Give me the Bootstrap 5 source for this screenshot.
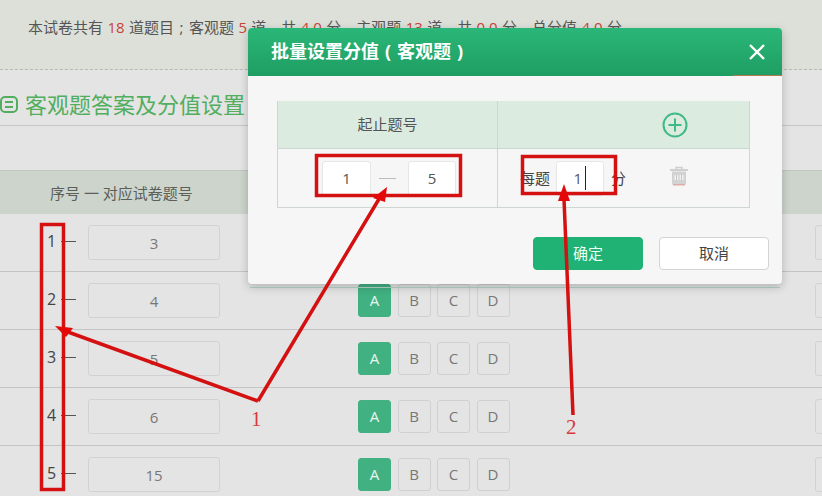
<!DOCTYPE html>
<html lang="zh">
<head>
<meta charset="utf-8">
<title>批量设置分值</title>
<link href="https://cdn.jsdelivr.net/npm/bootstrap@5.3.0/dist/css/bootstrap.min.css" rel="stylesheet">
<style>
html,body{height:496px;overflow:hidden}
body{position:relative;width:822px;background:#e4e4e4;font-family:"Open Sans","Noto Sans CJK SC",sans-serif;font-size:15px;color:#555}
.wide-punct{display:inline-block;width:1em;text-align:center}
.summary-band{height:70px;padding:18px 0 0 28px;background:#dde0d8;border-bottom:1px dashed #b9b9b9;line-height:18px;white-space:nowrap}
.summary-band em{font-style:normal;color:#c8423c;margin:0 .5px}
.section-title{height:56px;padding-top:20px;border-bottom:1px solid #c6c6c6;color:#52ae5e;font-size:22px;line-height:28px;white-space:nowrap}
.section-title svg{margin-right:7px;vertical-align:0}
.list-head{height:44px;margin-top:44px;padding-left:50px;background:#ccd4cc;border-top:1px solid #bfc7bf;line-height:44px;color:#5a5f5a}
.q-row{height:58px;border-bottom:1px solid #c4c4c4;overflow:hidden}
.q-row:last-child{border-bottom:0}
.q-num{flex:none;width:14px;margin:-4px 0 0 47px;font-size:16px;color:#444;line-height:20px}
.q-dash{flex:none;width:15px;height:1px;margin:-3px 0 0 0;background:#555}
.q-field.form-control{flex:none;width:132px;height:35px;margin-left:12px;padding:0;background:transparent;border-color:#d2d2d2;border-radius:3px;color:#777;font-size:15px;text-align:center}
.q-opts{flex:none;margin-left:138px;gap:6.5px}
.q-opt{width:33px;height:33px;padding:0;border:1px solid #d0d0d0;border-radius:3px;color:#777;font-size:15px;line-height:31px;text-align:center}
.q-opt.is-on{background:#41b182;border-color:#41b182;color:#e9f6f0}
.q-edge{flex:none;width:60px;height:35px;margin-left:305px;border:1px solid #d2d2d2;border-radius:3px}
.dlg{position:absolute;left:248px;top:28px;width:534px;height:256px;background:#f6f6f6;border-radius:4px;box-shadow:0 3px 10px rgba(0,0,0,.22)}
.dlg-head{height:48px;padding:0 16px 0 23px;background:linear-gradient(#2ab778,#1f9e63);border-radius:4px 4px 0 0;border-bottom:1px solid #1f9e63;color:#fff;font-size:18px;font-weight:700;position:relative}
.dlg-head::after{content:"";position:absolute;right:0;bottom:-1px;width:49px;height:1px;background:#b5794d}
.dlg-under{position:absolute;left:250px;top:287px;width:530px;height:1px;background:#b5d3c6}
.dlg-table{width:473px;margin:25px 0 0 29px;border:1px solid #cfd6d1;border-top:0}
.dlg-hrow{height:48px;background:#dcebdf;border-bottom:1px solid #cbd6ce;color:#555}
.dlg-brow{height:58px}
.cell-a{width:220px;border-right:1px solid #cfd6d1}
.cell-b{flex:1;min-width:0}
.add-slot{margin-left:164px}
.range-input.form-control{flex:none;width:49px;height:35px;padding:0;border-color:#e6e6e6;border-radius:3px;background:#fff;color:#555;font-size:15px;text-align:center}
.range-input.range-end{width:48px}
.range-dash{flex:none;width:17px;height:1px;margin:0 12px 0 8px;background:#bbb}
.range-start{margin-left:44px}
.per-label{margin-left:22px;color:#444;line-height:35px;white-space:nowrap}
.per-box{flex:none;width:48px;height:35px;margin:0 7px 0 6px;padding-right:21px;background:#fff;border:1px solid #e6e6e6;border-radius:3px;font-size:15px;line-height:33px;text-align:right;color:#555;position:relative}
.per-box::after{content:"";position:absolute;left:28px;top:4px;width:1px;height:24px;background:#222}
.trash-slot{margin-left:43px;margin-top:-5px}
.dlg-foot{margin:29px 13px 0 0;gap:16px}
.dlg-ok.btn,.dlg-no.btn{width:110px;height:33px;padding:0;border-radius:4px;font-size:15px;line-height:31px}
.dlg-ok.btn{background:#1fb274;border-color:#1fb274;color:#eafff5}
.dlg-no.btn{background:#fff;border-color:#d4d4d4;color:#444}
.marks{position:absolute;left:0;top:0;pointer-events:none}
.marks text{font-family:"Liberation Serif",serif;font-size:21px;fill:#d8383a}
</style>
</head>
<body>
<div class="summary-band">本试卷共有 <em>18</em> 道题目<span class="wide-punct">;</span>客观题 <em>5</em> 道，共 <em>4.0</em> 分，主观题 <em>13</em> 道，共 <em>0.0</em> 分，总分值 <em>4.0</em> 分</div>
<div class="section-title">
  <svg width="18" height="17" viewBox="0 0 18 17" fill="none" stroke="#52ae5e" stroke-width="2"><rect x="1" y="1" width="16" height="15" rx="4"/><path d="M5 6h8M5 11h8"/></svg>客观题答案及分值设置
</div>
<div class="list-head">序号 一 对应试卷题号</div>

<div class="q-row d-flex align-items-center"><span class="q-num">1</span><span class="q-dash"></span><input class="q-field form-control" value="3" readonly><div class="q-opts d-flex"><span class="q-opt is-on">A</span><span class="q-opt">B</span><span class="q-opt">C</span><span class="q-opt">D</span></div><span class="q-edge"></span></div>
<div class="q-row d-flex align-items-center"><span class="q-num">2</span><span class="q-dash"></span><input class="q-field form-control" value="4" readonly><div class="q-opts d-flex"><span class="q-opt is-on">A</span><span class="q-opt">B</span><span class="q-opt">C</span><span class="q-opt">D</span></div><span class="q-edge"></span></div>
<div class="q-row d-flex align-items-center"><span class="q-num">3</span><span class="q-dash"></span><input class="q-field form-control" value="5" readonly><div class="q-opts d-flex"><span class="q-opt is-on">A</span><span class="q-opt">B</span><span class="q-opt">C</span><span class="q-opt">D</span></div><span class="q-edge"></span></div>
<div class="q-row d-flex align-items-center"><span class="q-num">4</span><span class="q-dash"></span><input class="q-field form-control" value="6" readonly><div class="q-opts d-flex"><span class="q-opt is-on">A</span><span class="q-opt">B</span><span class="q-opt">C</span><span class="q-opt">D</span></div><span class="q-edge"></span></div>
<div class="q-row d-flex align-items-center"><span class="q-num">5</span><span class="q-dash"></span><input class="q-field form-control" value="15" readonly><div class="q-opts d-flex"><span class="q-opt is-on">A</span><span class="q-opt">B</span><span class="q-opt">C</span><span class="q-opt">D</span></div><span class="q-edge"></span></div>

<div class="dlg-under"></div>
<div class="dlg">
  <div class="dlg-head d-flex align-items-center justify-content-between">
    <span>批量设置分值<span class="wide-punct">(</span>客观题<span class="wide-punct">)</span></span>
    <svg width="18" height="18" viewBox="0 0 18 18" stroke="#fff" stroke-width="2.4" fill="none"><path d="M2 2l14 14M16 2L2 16"/></svg>
  </div>
  <div class="dlg-table">
    <div class="dlg-hrow d-flex align-items-center">
      <div class="cell-a h-100 d-flex align-items-center justify-content-center">起止题号</div>
      <div class="cell-b d-flex align-items-center">
        <span class="add-slot d-flex"><svg width="26" height="26" viewBox="0 0 26 26" fill="none" stroke="#3dba85" stroke-width="2"><circle cx="13" cy="13" r="11.5"/><path d="M13 6.500v13M6.500 13h13"/></svg></span>
      </div>
    </div>
    <div class="dlg-brow d-flex align-items-center">
      <div class="cell-a h-100 d-flex align-items-center">
        <input class="range-input range-start form-control" value="1" readonly><span class="range-dash"></span><input class="range-input range-end form-control" value="5" readonly>
      </div>
      <div class="cell-b d-flex align-items-center">
        <span class="per-label">每题</span><span class="per-box">1</span><span class="per-label m-0">分</span>
        <span class="trash-slot d-flex"><svg width="20" height="20" viewBox="0 0 20 20"><path d="M1 4h18" stroke="#cfcfcf" stroke-width="2"/><path d="M7 3V1.500h6V3" stroke="#cfcfcf" stroke-width="1.500" fill="none"/><path d="M3 5.500h14V17a2 2 0 0 1-2 2H5a2 2 0 0 1-2-2z" fill="#d2d2d2"/><rect x="5.500" y="9" width="9" height="5" fill="#f2f2f2"/><path d="M7.500 9v5M10 9v5M12.500 9v5" stroke="#c4c4c4"/><path d="M4 18.800h12" stroke="#dfa3a0" stroke-width="1.200"/></svg></span>
      </div>
    </div>
  </div>
  <div class="dlg-foot d-flex justify-content-end">
    <button class="dlg-ok btn" type="button">确定</button>
    <button class="dlg-no btn" type="button">取消</button>
  </div>
</div>

<svg class="marks" width="822" height="496" viewBox="0 0 822 496" fill="none">
  <g stroke="#d41010" stroke-width="3.500">
    <rect x="41.500" y="224.500" width="22" height="265"/>
    <rect x="316.500" y="155.500" width="144" height="40"/>
    <rect x="522.500" y="156.500" width="93" height="37"/>
    <path d="M258 401L68 332M258 401L379 199M573 415L564 199"/>
  </g>
  <g fill="#e40808">
    <path d="M55 326L73 328L66 337Z"/>
    <path d="M387 187L373 198L385 202Z"/>
    <path d="M564 184L558 201L570 201Z"/>
  </g>
  <text x="251" y="426">1</text>
  <text x="566" y="434">2</text>
</svg>
</body>
</html>
